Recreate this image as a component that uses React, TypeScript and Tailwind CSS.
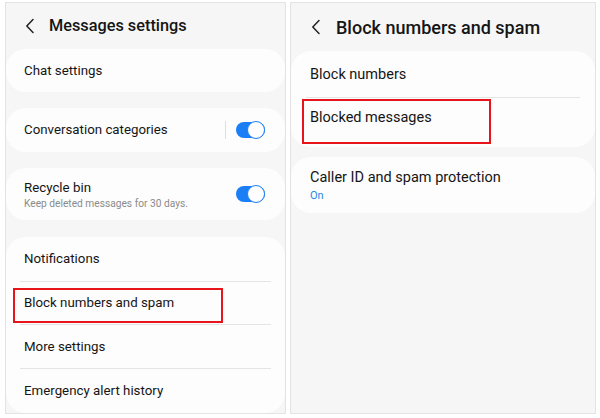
import React from "react";

const Chevron = ({ className = "" }: { className?: string }) => (
  <svg className={className} width="10" height="16" viewBox="0 0 10 16" fill="none">
    <path d="M8 1.5 L1.8 8 L8 14.5" stroke="#222" strokeWidth="1.5" strokeLinecap="round" strokeLinejoin="round" />
  </svg>
);

const Toggle = () => (
  <div className="relative w-[29px] h-[16px] rounded-full bg-[#1a7ff5]">
    <div className="absolute right-0 top-[-1px] w-[18px] h-[18px] rounded-full bg-white border-[1.5px] border-[#1a7ff5]" />
  </div>
);

const Divider = () => <div className="h-px bg-[#e4e4e4] mx-[14px]" />;

export default function App() {
  return (
    <div
      className="w-[600px] h-[418px] bg-white flex items-start pt-[2px] pl-[5px] text-[#151515]"
      style={{ fontFamily: "Roboto, 'Noto Sans', sans-serif" }}
    >
      {/* Left panel */}
      <div className="relative w-[281px] h-[412px] bg-[#f6f6f6] border border-[#e3e3e3] flex flex-col">
        <div className="h-[46px] flex items-center pl-[19px]">
          <Chevron />
          <span className="ml-[14px] text-[16.3px] font-medium">Messages settings</span>
        </div>
        <div className="h-[43px] bg-[#fdfdfd] rounded-[20px] flex items-center pl-[18px] text-[13.3px]">
          Chat settings
        </div>
        <div className="mt-[16px] h-[44px] bg-[#fdfdfd] rounded-[20px] flex items-center pl-[18px] pr-[20px] text-[13.3px]">
          <span className="flex-1">Conversation categories</span>
          <div className="w-px h-[18px] bg-[#dedede] mr-[10px]" />
          <Toggle />
        </div>
        <div className="mt-[16px] h-[52px] bg-[#fdfdfd] rounded-[20px] flex items-center pl-[18px] pr-[20px]">
          <div className="flex-1 flex flex-col pt-[1px]">
            <span className="text-[13.3px] leading-[18px]">Recycle bin</span>
            <span className="text-[10.2px] text-[#8a8a8a] leading-[14px]">Keep deleted messages for 30 days.</span>
          </div>
          <Toggle />
        </div>
        <div className="mt-[17px] flex-1 bg-[#fdfdfd] rounded-[20px] flex flex-col text-[13.3px]">
          <div className="h-[44px] flex items-center pl-[18px]">Notifications</div>
          <Divider />
          <div className="h-[42px] flex items-center pl-[18px]">Block numbers and spam</div>
          <Divider />
          <div className="h-[43px] flex items-center pl-[18px]">More settings</div>
          <Divider />
          <div className="h-[43px] flex items-center pl-[18px]">Emergency alert history</div>
        </div>
        <div className="absolute left-[7px] top-[285px] w-[210px] h-[35px] border-2 border-[#e8141b]" />
      </div>

      {/* Right panel */}
      <div className="relative ml-[4px] w-[306px] h-[412px] bg-[#f6f6f6] border border-[#e3e3e3] flex flex-col">
        <div className="h-[48px] flex items-center pl-[20px]">
          <Chevron />
          <span className="ml-[15px] text-[18px] font-medium">Block numbers and spam</span>
        </div>
        <div className="h-[96px] bg-[#fdfdfd] rounded-[20px] flex flex-col text-[14.5px]">
          <div className="h-[46px] flex items-center pl-[19px] pt-[1px]">Block numbers</div>
          <div className="h-px bg-[#e4e4e4] mx-[15px]" />
          <div className="h-[40px] flex items-center pl-[19px]">Blocked messages</div>
        </div>
        <div className="mt-[10px] h-[56px] bg-[#fdfdfd] rounded-[20px] flex flex-col justify-center pl-[19px]">
          <span className="text-[14.5px] leading-[19px]">Caller ID and spam protection</span>
          <span className="text-[11px] leading-[14px] mt-[2px] text-[#1e88e5]">On</span>
        </div>
        <div className="absolute left-[11px] top-[96px] w-[189px] h-[45px] border-2 border-[#e8141b]" />
      </div>
    </div>
  );
}
